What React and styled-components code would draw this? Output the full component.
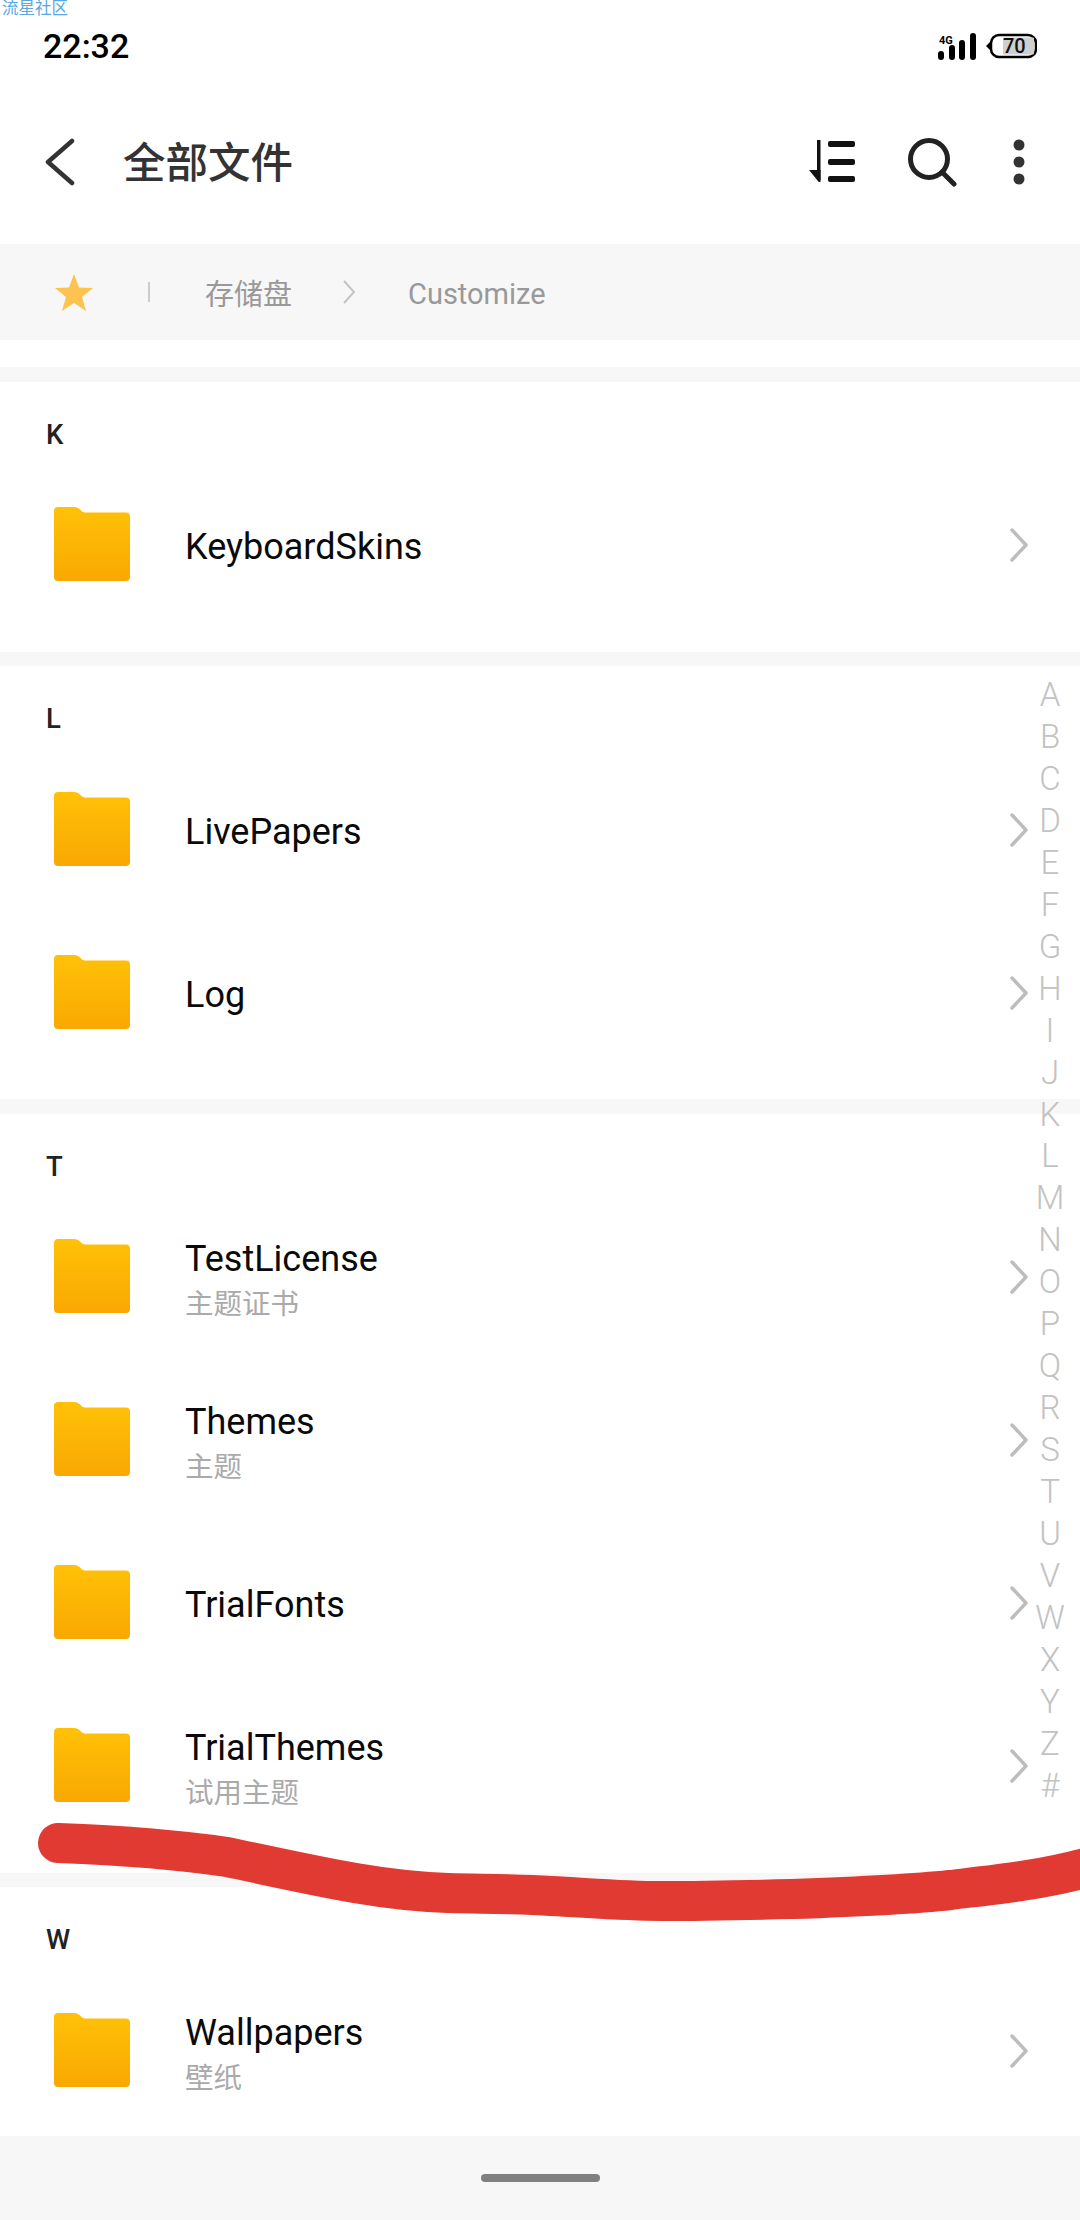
import React from 'react'
import styled, { createGlobalStyle } from 'styled-components'

const GlobalStyle = createGlobalStyle`
  html, body {
    margin: 0;
    padding: 0;
    background: #fff;
    font-family: Roboto, "Noto Sans CJK SC", sans-serif;
  }
`

const Page = styled.div`
  position: relative;
  width: 1080px;
  height: 2220px;
  overflow: hidden;
  background: #fff;
  display: flex;
  flex-direction: column;
`

// Overlays
const Watermark = styled.div`
  position: absolute;
  left: 2px;
  top: 0;
  font-size: 16.5px;
  line-height: 17px;
  color: #5ba6e6;
`

const Scribble = styled.svg`
  position: absolute;
  left: 0;
  top: 0;
  pointer-events: none;
`

const AlphaIndex = styled.div`
  position: absolute;
  top: 674px;
  right: 0;
  width: 60px;
  display: flex;
  flex-direction: column;
  align-items: center;
`

const AlphaLetter = styled.span`
  height: 41.96px;
  line-height: 41.96px;
  font-size: 33px;
  font-weight: 300;
  color: #c2c2c2;
`

// Status bar
const StatusBar = styled.div`
  height: 92px;
  box-sizing: border-box;
  padding: 0 43px;
  display: flex;
  align-items: center;
  justify-content: space-between;
`

const Clock = styled.span`
  font-size: 34px;
  font-weight: 500;
  color: #000;
`

// Title bar
const TitleBar = styled.div`
  height: 152px;
  box-sizing: border-box;
  padding-bottom: 12px;
  display: flex;
  align-items: center;
  padding-left: 44px;
`

const Title = styled.h1`
  margin: 0 0 6px 47px;
  font-size: 42.5px;
  font-weight: 500;
  color: #333;
  flex: 1;
`

const Actions = styled.div`
  display: flex;
  align-items: center;
  margin-right: 55px;
  gap: 50px;
`

const MoreIcon = styled.svg`
  margin-left: 6px;
`

// Breadcrumb
const Crumbs = styled.div`
  height: 96px;
  background: #f7f7f7;
  display: flex;
  align-items: center;
  padding-left: 55px;
  color: #999;
`

const CrumbText = styled.span`
  font-size: ${p => p.$size}px;
  margin-left: ${p => p.$left}px;
  padding-top: ${p => p.$drop || 0}px;
`

const CrumbDivider = styled.i`
  width: 2px;
  height: 20px;
  background: #ccc;
  margin-left: 55px;
`

const CrumbArrow = styled.svg`
  margin-left: 50px;
`

// Folder list
const Spacer = styled.div`
  height: 27px;
`

const Band = styled.div`
  height: 14.5px;
  background: #f7f7f7;
`

const Section = styled.section`
  padding-bottom: ${p => (p.$last ? 4 : 25)}px;
`

const SectionTitle = styled.div`
  height: 82px;
  box-sizing: border-box;
  padding: 38px 0 0 46px;
  font-size: 27.5px;
  line-height: 30px;
  font-weight: 500;
  color: #222;
`

const Row = styled.div`
  height: 163px;
  display: flex;
  align-items: center;
  padding: 0 52px 0 54px;
`

const FolderIcon = styled.svg`
  margin-bottom: 2px;
`

const RowText = styled.div`
  margin-left: 55px;
  flex: 1;
  padding-top: ${p => (p.$withSub ? 10 : 4)}px;
`

const Name = styled.div`
  font-size: 36px;
  line-height: 44px;
  color: #0a0a0a;
`

const Sub = styled.div`
  font-size: 28.5px;
  line-height: 44px;
  margin-top: 2px;
  color: #aaa;
`

const Footer = styled.div`
  flex: 1;
  background: #f7f7f7;
  display: flex;
  justify-content: center;
  padding-top: 38px;
`

const HomeBar = styled.div`
  width: 119px;
  height: 8px;
  border-radius: 4px;
  background: #808080;
`

const Folder = () => (
  <FolderIcon width="76" height="74" viewBox="0 0 76 74">
    <defs>
      <linearGradient id="folderFill" x1="0" y1="0" x2="0" y2="1">
        <stop offset="0" stopColor="#ffc107" />
        <stop offset="1" stopColor="#f9a802" />
      </linearGradient>
    </defs>
    <path
      d="M4 0H20C23 0 25 1.500 27 3.500C28.500 5 29.500 5.500 32 5.500H72C74.500 5.500 76 7 76 9.500V70C76 72.500 74.500 74 72 74H4C1.500 74 0 72.500 0 70V4C0 1.500 1.500 0 4 0Z"
      fill="url(#folderFill)"
    />
  </FolderIcon>
)

const RowChevron = () => (
  <svg width="18" height="34" viewBox="0 0 18 34" fill="none">
    <path d="M2 2L16 17L2 32" stroke="#bdbdbd" strokeWidth="3.500" strokeLinecap="round" strokeLinejoin="round" />
  </svg>
)

const Signal = () => (
  <svg width="99" height="27" viewBox="0 0 99 27">
    <g fill="#000">
      <rect x="0" y="18" width="6" height="9" rx="3" />
      <rect x="11" y="12" width="6" height="15" rx="3" />
      <rect x="21" y="7" width="6" height="20" rx="3" />
      <rect x="32" y="0" width="6" height="27" rx="3" />
      <text x="1" y="10.500" fontSize="11" fontWeight="700" fontFamily="Roboto, sans-serif">4G</text>
      <path d="M48 13L52 9V17Z" />
    </g>
    <rect x="53" y="2" width="45" height="22" rx="8" fill="#fff" stroke="#000" strokeWidth="2.500" />
    <rect x="65" y="4.500" width="31" height="17" rx="1" fill="#cfcfcf" />
    <text x="65" y="20" fontSize="20" fontWeight="500" fill="#111" fontFamily="Roboto, sans-serif">70</text>
  </svg>
)

const sections = [
  { letter: 'K', rows: [{ name: 'KeyboardSkins' }] },
  { letter: 'L', rows: [{ name: 'LivePapers' }, { name: 'Log' }] },
  {
    letter: 'T',
    rows: [
      { name: 'TestLicense', sub: '主题证书' },
      { name: 'Themes', sub: '主题' },
      { name: 'TrialFonts' },
      { name: 'TrialThemes', sub: '试用主题' }
    ]
  },
  { letter: 'W', rows: [{ name: 'Wallpapers', sub: '壁纸' }], last: true }
]

const letters = 'ABCDEFGHIJKLMNOPQRSTUVWXYZ#'.split('')

const App = () => (
  <Page>
    <GlobalStyle />
    <StatusBar>
      <Clock>22:32</Clock>
      <Signal />
    </StatusBar>
    <TitleBar>
      <svg width="32" height="48" viewBox="0 0 32 48" fill="none">
        <path d="M28 3L4 24L28 45" stroke="#333" strokeWidth="4.500" strokeLinecap="round" strokeLinejoin="round" />
      </svg>
      <Title>全部文件</Title>
      <Actions>
        <svg width="48" height="44" viewBox="0 0 48 44" fill="#111">
          <rect x="8" y="0" width="3.500" height="40" />
          <path d="M0 30L9.750 42L11.500 42V30Z" />
          <rect x="19" y="1" width="27" height="6" rx="2" />
          <rect x="19" y="19" width="27" height="6" rx="2" />
          <rect x="19" y="36" width="27" height="6" rx="2" />
        </svg>
        <svg width="50" height="50" viewBox="0 0 50 50" fill="none">
          <circle cx="22" cy="22" r="18.500" stroke="#222" strokeWidth="5" />
          <path d="M35 35L47 47" stroke="#222" strokeWidth="5" strokeLinecap="round" />
        </svg>
        <MoreIcon width="12" height="46" viewBox="0 0 12 46" fill="#333">
          <circle cx="6" cy="6" r="5.500" />
          <circle cx="6" cy="23" r="5.500" />
          <circle cx="6" cy="40" r="5.500" />
        </MoreIcon>
      </Actions>
    </TitleBar>
    <Crumbs>
      <svg width="38" height="37" viewBox="0 0 38 37">
        <path d="M19 0L24 13.500L38 14L27 23L31 37L19 29L7 37L11 23L0 14L14 13.500Z" fill="#fdc24f" />
      </svg>
      <CrumbDivider />
      <CrumbText $size={29} $left={55}>存储盘</CrumbText>
      <CrumbArrow width="14" height="24" viewBox="0 0 14 24" fill="none">
        <path d="M2 1L12 12L2 23" stroke="#c4c4c4" strokeWidth="2" />
      </CrumbArrow>
      <CrumbText $size={29} $left={52} $drop={3}>Customize</CrumbText>
    </Crumbs>
    <Spacer />
    {sections.map(section => (
      <React.Fragment key={section.letter}>
        <Band />
        <Section $last={section.last}>
          <SectionTitle>{section.letter}</SectionTitle>
          {section.rows.map(row => (
            <Row key={row.name}>
              <Folder />
              <RowText $withSub={Boolean(row.sub)}>
                <Name>{row.name}</Name>
                {row.sub && <Sub>{row.sub}</Sub>}
              </RowText>
              <RowChevron />
            </Row>
          ))}
        </Section>
      </React.Fragment>
    ))}
    <Footer>
      <HomeBar />
    </Footer>
    <AlphaIndex>
      {letters.map(l => <AlphaLetter key={l}>{l}</AlphaLetter>)}
    </AlphaIndex>
    <Scribble width="1080" height="2220" viewBox="0 0 1080 2220" fill="none">
      <path
        d="M58 1843C110 1845 180 1850 227 1857C270 1866 315 1876 355 1883C390 1889 420 1892 448 1893C490 1894 520 1894 551 1896C590 1898 625 1901 661 1901C700 1901 750 1900 792 1899C850 1897 905 1895 950 1890C1000 1884 1040 1880 1085 1868"
        stroke="#e03a32"
        strokeWidth="40"
        strokeLinecap="round"
      />
    </Scribble>
    <Watermark>流星社区</Watermark>
  </Page>
)

export default App
